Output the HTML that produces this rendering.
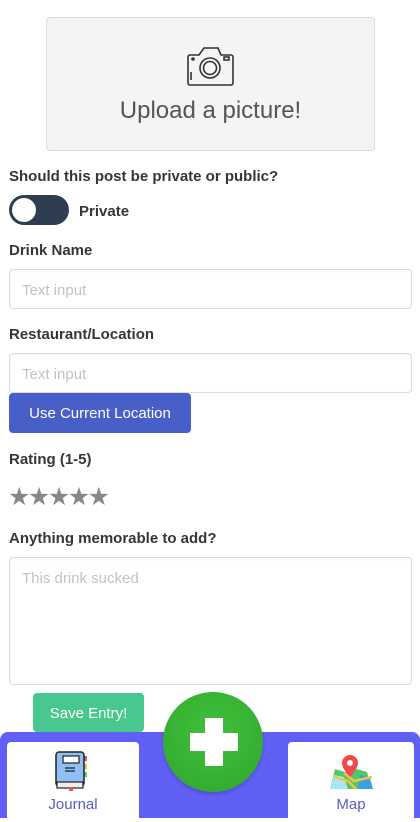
<!DOCTYPE html>
<html><head><meta charset="utf-8"><style>
*{box-sizing:border-box;margin:0;padding:0}
body{width:420px;height:818px;overflow:hidden;background:#fff;font-family:"Liberation Sans",sans-serif;color:#363636;position:relative}
.a{position:absolute}
.lbl{position:absolute;left:9px;font-weight:bold;font-size:15px;color:#363636}
.inp{position:absolute;left:9px;width:403px;height:40px;border:1px solid #dbdbdb;border-radius:4px;font-size:15px;color:#c2c2c2;padding:12px 12px 0;box-shadow:inset 0 1px 2px rgba(10,10,10,.05)}
</style></head><body>
<div class="a" style="left:46px;top:17px;width:329px;height:134px;background:#f4f4f4;border:1px solid #dcdcdc;border-radius:4px"></div>
<svg class="a" style="left:186px;top:45px" width="50" height="42" viewBox="0 0 50 42" fill="none" stroke="#333" stroke-width="1.6">
<path d="M3 10h10l5-7h14l3 7h10a2 2 0 0 1 2 2v26a2 2 0 0 1-2 2H4a2 2 0 0 1-2-2V12a2 2 0 0 1 2-2z"/>
<circle cx="24" cy="23" r="10"/><circle cx="24" cy="23" r="6.5"/><rect x="38" y="12" width="5" height="3"/><circle cx="7" cy="14" r="1"/><path d="M5 27v8"/></svg>
<div class="a" style="left:46px;top:97px;width:329px;text-align:center;font-size:24px;color:#555">Upload a picture!</div>
<div class="lbl" style="top:168px">Should this post be private or public?</div>
<div class="a" style="left:9px;top:195px;width:60px;height:30px;border-radius:15px;background:#2e3e50"></div>
<div class="a" style="left:12px;top:198px;width:24px;height:24px;border-radius:12px;background:#fff"></div>
<div class="a" style="left:79px;top:203px;font-weight:bold;font-size:15px">Private</div>
<div class="lbl" style="top:242px">Drink Name</div>
<div class="inp" style="top:269px">Text input</div>
<div class="lbl" style="top:326px">Restaurant/Location</div>
<div class="inp" style="top:353px">Text input</div>
<div class="a" style="left:9px;top:393px;width:182px;height:40px;background:#485fc7;border-radius:4px;color:#fff;font-size:15px;text-align:center;line-height:42px">Use Current Location</div>
<div class="lbl" style="top:451px">Rating (1-5)</div>
<div class="a" style="left:8px;top:482px;font-size:25px;color:#888;letter-spacing:-2.5px;font-family:'DejaVu Sans',sans-serif">★★★★★</div>
<div class="lbl" style="top:530px">Anything memorable to add?</div>
<div class="inp" style="top:557px;height:128px">This drink sucked</div>
<div class="a" style="left:33px;top:693px;width:111px;height:39px;background:#48c78e;border-radius:4px;color:#fff;font-size:15px;text-align:center;line-height:41px">Save Entry!</div>
<div class="a" style="left:0;top:732px;width:420px;height:86px;background:#6160f6;border-radius:8px 8px 0 0"></div>
<div class="a" style="left:7px;top:742px;width:132px;height:80px;background:#fff;border-radius:4px"></div>
<div class="a" style="left:288px;top:742px;width:126px;height:80px;background:#fff;border-radius:4px"></div>
<svg class="a" style="left:54px;top:751px" width="40" height="40" viewBox="0 0 40 40">
<rect x="29" y="5" width="4" height="5" fill="#e55"/><rect x="29" y="13" width="4" height="5" fill="#e5c24a"/><rect x="29" y="21" width="4" height="5" fill="#6c6"/>
<rect x="2" y="1" width="28" height="34" rx="3" fill="#8fc0f5" stroke="#222" stroke-width="1.5"/>
<rect x="3" y="31" width="26" height="6" fill="#eee" stroke="#222" stroke-width="1.2"/>
<rect x="9" y="5" width="16" height="7" fill="#fff" stroke="#222" stroke-width="1.2"/>
<path d="M11 17h10M11 20h10" stroke="#222" stroke-width="1.2"/><rect x="15" y="36" width="4" height="4" fill="#e55"/></svg>
<svg class="a" style="left:328px;top:753px" width="46" height="38" viewBox="0 0 46 38">
<path d="M2 36l5-20 10 3 12-3 10 3 5 17z" fill="#4cc96b"/><path d="M2 36l4-14 10 2 4 12z" fill="#a8e6f7"/><path d="M30 36l2-14 10 3 3 11z" fill="#3b9fe0"/>
<path d="M6 24l14 4 8 8M16 20l10 8 18-4" stroke="#f6c445" stroke-width="2.5" fill="none"/>
<path d="M22 2a8 8 0 0 1 8 8c0 6-8 14-8 14s-8-8-8-14a8 8 0 0 1 8-8z" fill="#f24a4a"/><circle cx="22" cy="10" r="3" fill="#fff"/></svg>
<div class="a" style="left:7px;top:796px;width:132px;text-align:center;font-size:15px;color:#5a5ac8">Journal</div>
<div class="a" style="left:288px;top:796px;width:126px;text-align:center;font-size:15px;color:#5a5ac8">Map</div>
<div class="a" style="left:163px;top:692px;width:100px;height:100px;border-radius:50%;background:radial-gradient(circle at 50% 40%,#41c13a,#30a52e);box-shadow:0 2px 4px rgba(0,0,0,.2)"></div>
<div class="a" style="left:190px;top:733px;width:48px;height:18px;background:#fff"></div>
<div class="a" style="left:205px;top:718px;width:18px;height:48px;background:#fff"></div>
</body></html>
